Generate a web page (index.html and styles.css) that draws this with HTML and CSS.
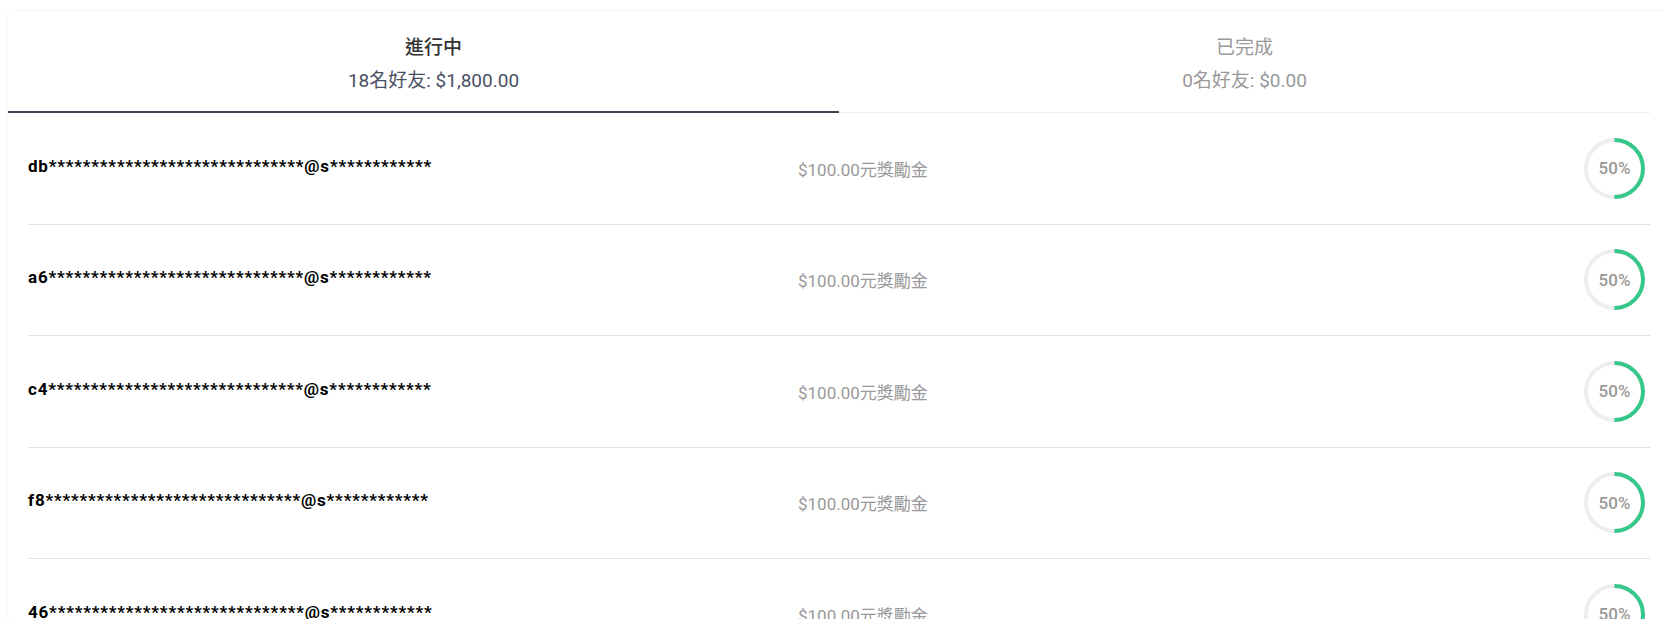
FILE: index.html
```html
<!DOCTYPE html>
<html lang="zh-Hant">
<head>
  <meta charset="UTF-8">
  <meta name="viewport" content="width=device-width, initial-scale=1.0">
  <title>邀請好友</title>
  <link rel="stylesheet" href="styles.css">
</head>
<body>
  <div class="page">
    <div class="card">
      <div class="tabs">
        <div class="tab active">
          <div class="tab-title">進行中</div>
          <div class="tab-sub">18名好友: $1,800.00</div>
        </div>
        <div class="tab">
          <div class="tab-title">已完成</div>
          <div class="tab-sub">0名好友: $0.00</div>
        </div>
      </div>

      <div class="list" id="list"></div>
    </div>
  </div>

  <script>
    const friends = ['db', 'a6', 'c4', 'f8', '46'];
    const list = document.getElementById('list');
    const circ = 2 * Math.PI * 28.5;

    friends.forEach(prefix => {
      const email = prefix + '*'.repeat(30) + '@s' + '*'.repeat(12);
      const dash = (circ * 0.5).toFixed(2) + ' ' + circ.toFixed(2);
      list.innerHTML += `
        <div class="row">
          <div class="email">${email}</div>
          <div class="amount">$100.00元獎勵金</div>
          <div class="ring">
            <svg width="61" height="61" viewBox="0 0 61 61">
              <circle class="track" cx="30.5" cy="30.5" r="28.5"></circle>
              <circle class="bar" cx="30.5" cy="30.5" r="28.5" stroke-dasharray="${dash}"></circle>
            </svg>
            <span>50%</span>
          </div>
        </div>`;
    });
  </script>
</body>
</html>
```

FILE: styles.css
```css
body {
  margin: 0;
  overflow: hidden;
  background: #fff;
  font-family: Roboto, "Noto Sans CJK TC", sans-serif;
}
.page {
  padding: 11px 0 0 8px;
}
.card {
  height: 608px;
  margin-right: -5px;
  padding: 0 20px;
  overflow: hidden;
  background: #fff;
  border-radius: 4px;
  box-shadow: 0 0 3px rgba(0, 0, 0, 0.08);
}
.tabs {
  display: grid;
  grid-template-columns: 1fr 1fr;
  border-bottom: 1px solid #eee;
}
.tab {
  position: relative;
  box-sizing: border-box;
  height: 101px;
  padding-top: 6px;
  display: flex;
  flex-direction: column;
  align-items: center;
  justify-content: center;
  gap: 9px;
  font-size: 19px;
  color: #999;
}
.tab-title {
  line-height: 24px;
}
.tab-sub {
  line-height: 24px;
}
.tab.active .tab-title {
  color: #333;
  font-weight: 500;
}
.tab.active .tab-sub {
  color: #4a5064;
}
.tab.active::after {
  content: "";
  position: absolute;
  left: -20px;
  right: 0;
  bottom: -1px;
  height: 2px;
  background: #3d4352;
}
.row {
  display: grid;
  grid-template-columns: 770px 1fr auto;
  align-items: center;
  min-height: 110.5px;
  border-bottom: 1px solid #e0e0e0;
}
.email {
  padding-bottom: 5px;
  font-size: 17px;
  font-weight: bold;
  letter-spacing: 0.8px;
  color: #000;
}
.amount {
  font-size: 17px;
  color: #999;
}
.ring {
  position: relative;
  width: 61px;
  height: 61px;
  margin-right: 5px;
}
.ring svg {
  display: block;
  transform: rotate(-90deg);
}
.ring circle {
  fill: none;
  stroke-width: 4;
}
.ring .track {
  stroke: #eeeeee;
}
.ring .bar {
  stroke: #35c88a;
}
.ring span {
  position: absolute;
  inset: 0;
  display: flex;
  align-items: center;
  justify-content: center;
  font-size: 17px;
  font-weight: 500;
  color: #999;
}
```
